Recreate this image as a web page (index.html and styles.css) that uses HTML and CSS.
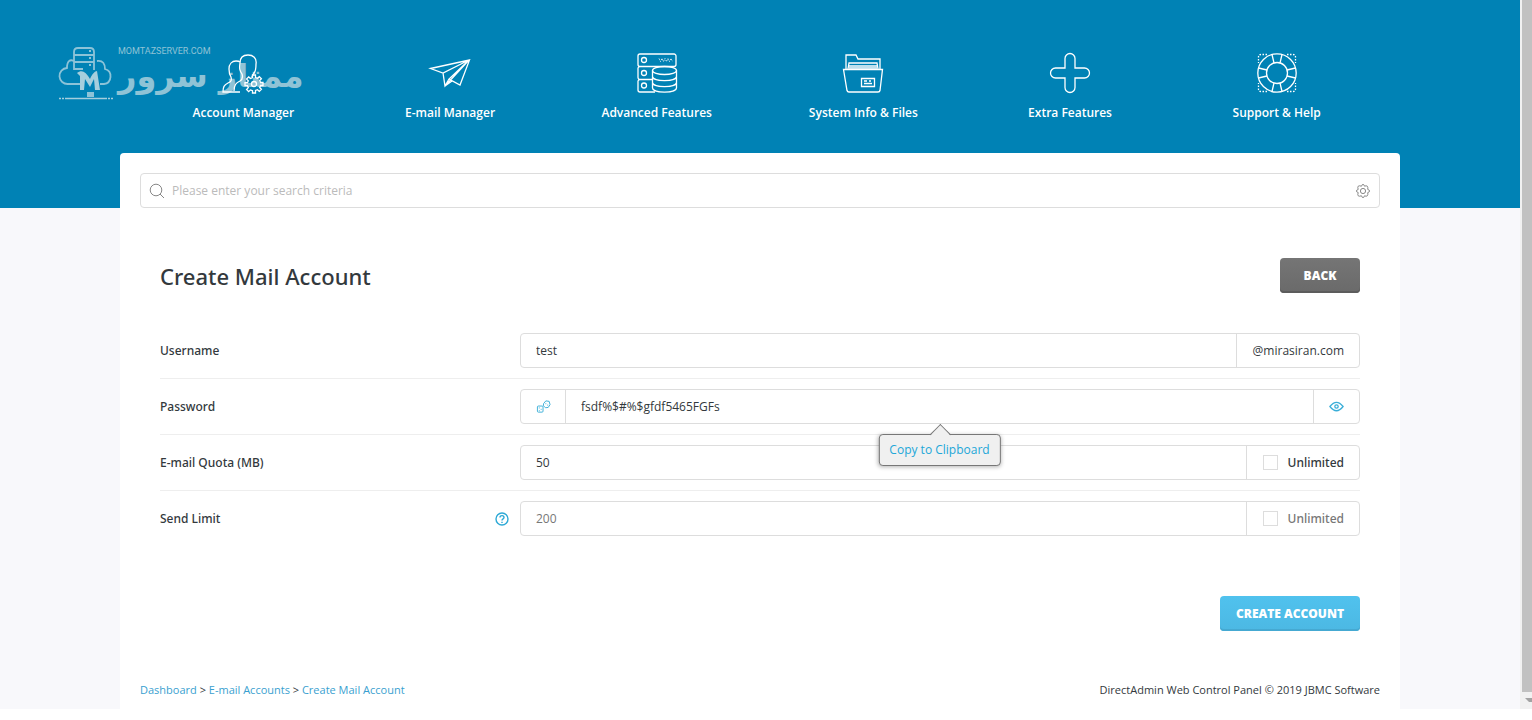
FILE: index.html
```html
<!DOCTYPE html>
<html lang="en">
<head>
    <meta charset="UTF-8">
    <meta name="viewport" content="width=device-width, initial-scale=1.0">
    <title>Create Mail Account</title>
    <link rel="stylesheet" href="styles.css">
</head>
<body>
    <div class="app">
        <header class="header">
            <a class="logo" href="#" aria-label="Momtaz Server">
                <svg class="logo-mark" width="56" height="56" viewBox="0 0 56 56">
                    <g fill="none" stroke="#8cc3d8" stroke-width="1.8">
                        <path d="M22 39H10a8 8 0 0 1-1-16c0-7 3-9 7-7M39 16c6-1 8 3 8 8 8 2 7 14-1 15h-4"/>
                        <path d="M16 25V7c0-3 1-4 4-4h12c3 0 4 1 4 4v18M16 10h20M16 17h20M16 24h9"/>
                        <path d="M31 6h2M31 13h2M31 20h2"/>
                    </g>
                    <path d="M22 45V31l-3-3c5-4 9-1 13 6 2-5 5-8 7-8l3 19h-5l-1-11-4 8-5-8-1 11z" fill="#a5cedd"/>
                    <path d="M29 47h7v5h-7z" fill="#8cc3d8"/>
                    <path d="M1 53.500h54" stroke="#a5cedd" stroke-width="1.500" stroke-dasharray="2 1 2 1 42 1"/>
                </svg>
                <span class="logo-text">
                    <span class="logo-domain">MOMTAZSERVER.COM</span>
                    <span class="logo-name" lang="fa" dir="rtl">ممتاز سرور</span>
                </span>
            </a>
            <nav class="nav">
                <a class="nav-item" href="#">
                    <svg class="nav-icon" viewBox="0 0 40 40">
                        <path d="M17 39H0c0-5 1-7 5-9 3-1 4-3 3-6-2-3-2-5-2-8 0-5 3-8 7-8 2 0 3 0 4 1"/>
                        <path d="M11 38c0-6 2-8 6-10 3-2 3-4 2-7-2-3-3-5-2-11 0-5 3-8 8-8s9 3 8 9c0 4 0 7-2 9-1 2-2 3-2 4"/>
                        <circle cx="31" cy="31" r="2.500"/>
                        <path d="M29.500 24.500V22h3v2.500l2 .8 1.800-1.600 2.100 2.100-1.700 1.800.8 1.900H40v3h-2.500l-.8 2 1.700 1.800-2.100 2.100-1.800-1.700-2 .8V40h-3v-2.300l-2-.8-1.800 1.700-2.100-2.100 1.700-1.800-.8-2H22v-3h2.500l.8-1.900-1.700-1.800 2.100-2.100 1.800 1.600z"/>
                    </svg>
                    <span>Account Manager</span>
                </a>
                <a class="nav-item" href="#">
                    <svg class="nav-icon" viewBox="0 0 40 40">
                        <path d="M.5 15.500L39.500 7 30 32l-11-6L39 7 13 20zM13 20l2 13L39 7M15 33l7-5M19 26l-4 7"/>
                    </svg>
                    <span>E-mail Manager</span>
                </a>
                <a class="nav-item" href="#">
                    <svg class="nav-icon" viewBox="0 0 40 40">
                        <path d="M15 26.500H3a2 2 0 0 1-2-2v-9a2 2 0 0 1 2-2h34a2 2 0 0 0 2-2V3a2 2 0 0 0-2-2H3a2 2 0 0 0-2 2v8.500a2 2 0 0 0 2 2M1 28a2 2 0 0 1 2-1.500M1 28v9a2 2 0 0 0 2 2h15"/>
                        <circle cx="7" cy="7" r="2.500"/>
                        <circle cx="7" cy="20" r="2.500"/>
                        <circle cx="7" cy="32.500" r="2.500"/>
                        <ellipse cx="27.500" cy="17.500" rx="12" ry="4"/>
                        <path d="M15.500 17.500V35c0 5.500 24 5.500 24 0V17.500M15.500 23.500c0 5.500 24 5.500 24 0M15.500 29.500c0 5.500 24 5.500 24 0"/>
                        <path d="M22 5.500l1.500 3L25 5.500l1.500 3 1.500-3 1.500 3 1.500-3 1.500 3 1.500-3 1.500 3" stroke-width=".8" stroke-dasharray="1.500 1"/>
                    </svg>
                    <span>Advanced Features</span>
                </a>
                <a class="nav-item" href="#">
                    <svg class="nav-icon" viewBox="0 0 40 40">
                        <path d="M.5 16.500h39L37 37.500q-.3 1.500-2 1.500H6q-1.500 0-2-1.500zM3 16V2h10l2 4h22v10"/>
                        <path d="M5 16l1-6h28l1 6M6 13h28M6 15h28"/>
                        <path d="M18.500 25.500h13v8h-13zM21 30.500h8M21 28h3M26 28h2"/>
                    </svg>
                    <span>System Info &amp; Files</span>
                </a>
                <a class="nav-item" href="#">
                    <svg class="nav-icon" viewBox="0 0 40 40">
                        <path d="M15 15V5.500a5 5 0 0 1 10 0V15h9.500a5 5 0 0 1 0 10H25v9.500a5 5 0 0 1-10 0V25H5.500a5 5 0 0 1 0-10z"/>
                    </svg>
                    <span>Extra Features</span>
                </a>
                <a class="nav-item" href="#">
                    <svg class="nav-icon" viewBox="0 0 40 40">
                        <circle cx="20" cy="20" r="19.200"/>
                        <circle cx="20" cy="20" r="10.500"/>
                        <path d="M15 1.500L17 10M25 1.500L23 10M15 38.500L17 30M25 38.500L23 30M1.500 15L10 17M1.500 25L10 23M38.500 15L30 17M38.500 25L30 23"/>
                        <path d="M10 1.500H4q-2.500 0-2.500 2.500v6M30 1.500h6q2.500 0 2.500 2.500v6M10 38.500H4q-2.500 0-2.500-2.500v-6M30 38.500h6q2.500 0 2.500-2.500v-6" stroke-dasharray="1.500 1.500"/>
                    </svg>
                    <span>Support &amp; Help</span>
                </a>
            </nav>
        </header>

        <main class="card">
            <form class="search">
                <svg class="search-icon" viewBox="0 0 16 16"><circle cx="7" cy="7" r="5.800"/><path d="M11 11l4 4"/></svg>
                <input type="text" class="search-input" aria-label="Search" placeholder="Please enter your search criteria">
                <button type="button" class="search-settings" aria-label="Search settings">
                    <svg class="search-icon" viewBox="0 0 16 16">
                        <circle cx="8" cy="8" r="2.600"/>
                        <path d="M6.500 3.200Q8-.8 9.500 3.200q3.900-1.700 3.300 3.300 4 1.500 0 3 .6 5-3.300 3.300-1.500 4-3 0-4.900 1.700-3.300-3.300-4-1.500 0-3-1.600-5 3.300-3.300z"/>
                    </svg>
                </button>
            </form>

            <form class="content">
                <div class="title-row">
                    <h1>Create Mail Account</h1>
                    <button type="button" class="btn btn-back">BACK</button>
                </div>

                <div class="row">
                    <label class="row-label" for="username">Username</label>
                    <div class="field">
                        <input type="text" id="username" value="test">
                        <span class="addon">@mirasiran.com</span>
                    </div>
                </div>
                <div class="row">
                    <label class="row-label" for="password">Password</label>
                    <div class="field">
                        <button type="button" class="addon addon-icon addon-left" aria-label="Generate password">
                            <svg width="15" height="15" viewBox="0 0 16 16">
                                <rect x="1.500" y="7.500" width="6" height="6.500" rx="1"/>
                                <path d="M8 5l2.500-3 3.500.5 1 3.500-2 3-3 .3-2-2z"/>
                                <path d="M3 9.500h1M5 11h1M3 12.500h1M10 5h1M12 6.500h1"/>
                            </svg>
                        </button>
                        <div class="copy-field">
                            <input type="text" id="password" value="fsdf%$#%$gfdf5465FGFs">
                            <button type="button" class="copy-tip">Copy to Clipboard</button>
                        </div>
                        <button type="button" class="addon addon-icon" aria-label="Show password">
                            <svg width="15" height="15" viewBox="0 0 16 16">
                                <path d="M1 8Q8-1 15 8 8 17 1 8z" stroke-width="1.400"/>
                                <circle cx="8" cy="8" r="1.800" stroke-width="1.400"/>
                            </svg>
                        </button>
                    </div>
                </div>
                <div class="row">
                    <label class="row-label" for="quota">E-mail Quota (MB)</label>
                    <div class="field">
                        <input type="text" id="quota" value="50">
                        <label class="addon addon-check"><input type="checkbox">Unlimited</label>
                    </div>
                </div>
                <div class="row">
                    <div class="row-label">
                        <label for="limit">Send Limit</label>
                        <button type="button" class="help" aria-label="Help">
                            <svg width="14" height="14" viewBox="0 0 14 14">
                                <circle cx="7" cy="7" r="6"/>
                                <path d="M5 5.500c0-2.600 4-2.500 4 0C9 7 7 6.800 7 8.500M7 9.800V11"/>
                            </svg>
                        </button>
                    </div>
                    <div class="field field-disabled">
                        <input type="text" id="limit" value="200" disabled>
                        <label class="addon addon-check"><input type="checkbox" disabled>Unlimited</label>
                    </div>
                </div>

                <div class="actions">
                    <button type="submit" class="btn btn-create">CREATE ACCOUNT</button>
                </div>
            </form>

            <footer class="footer">
                <div><a href="#">Dashboard</a> &gt; <a href="#">E-mail Accounts</a> &gt; <a href="#">Create Mail Account</a></div>
                <div>DirectAdmin Web Control Panel © 2019 JBMC Software</div>
            </footer>
        </main>
    </div>
    <div class="scrollbar">
        <div class="scrollbar-thumb"></div>
        <svg class="scrollbar-arrow" viewBox="0 0 10 17"><path d="M3 6h7v4L7 10z"/></svg>
    </div>
</body>
</html>
```
FILE: styles.css
```css
* {
    box-sizing: border-box;
}
body {
    margin: 0;
    display: flex;
    min-height: calc(100vh - 11px);
    background: #ffffff;
    font-family: "Open Sans", sans-serif;
    font-size: 12px;
    line-height: 20px;
    color: #33393d;
}
input, button {
    font: inherit;
    color: inherit;
}
button {
    cursor: pointer;
}
a {
    color: #3a9fd0;
    text-decoration: none;
}
svg {
    display: block;
    fill: none;
}

.app {
    flex: 1;
    display: flex;
    flex-direction: column;
    position: relative;
    padding: 0 120px;
    background: linear-gradient(#0082b5 208px, #f8f8fb 208px);
}

/* header */
.header {
    padding: 53px 20px 30px;
}
.logo {
    position: absolute;
    left: 58px;
    top: 45px;
    display: flex;
    gap: 4px;
    color: #8fc3d6;
}
.logo-text {
    display: flex;
    flex-direction: column;
}
.logo-domain {
    font: 9px/12px Roboto, sans-serif;
}
.logo-name {
    font: bold 32px/38px "DejaVu Sans", sans-serif;
    white-space: nowrap;
}
.nav {
    position: relative;
    display: flex;
}
.nav-item {
    flex: 1;
    display: flex;
    flex-direction: column;
    align-items: center;
    gap: 10px;
    color: #ffffff;
    font-weight: 600;
}
.nav-icon {
    width: 40px;
    height: 40px;
    stroke: #ffffff;
    stroke-width: 1.3;
    overflow: visible;
}

/* card */
.card {
    flex: 1;
    display: flex;
    flex-direction: column;
    padding: 20px 20px 9px;
    background: #ffffff;
    border-radius: 4px 4px 0 0;
}
.search {
    display: flex;
    align-items: center;
    height: 35px;
    padding: 0 8px;
    border: 1px solid #dddddd;
    border-radius: 4px;
}
.search-icon {
    width: 16px;
    height: 16px;
    stroke: #888888;
}
.search-input {
    flex: 1;
    border: none;
    outline: none;
    padding: 0 7px;
    background: none;
}
.search-input::placeholder {
    color: #bbbbbb;
}
.search-settings {
    padding: 0;
    border: none;
    background: none;
}

.content {
    padding: 50px 20px 48px;
}
.title-row {
    display: flex;
    justify-content: space-between;
    align-items: center;
    margin-bottom: 30px;
}
h1 {
    margin: 0;
    font-family: "Noto Sans", sans-serif;
    font-size: 22px;
    line-height: 30px;
    font-weight: 500;
}
.btn {
    height: 35px;
    border: none;
    border-radius: 4px;
    color: #ffffff;
    font-weight: 800;
}
.btn-back {
    width: 80px;
    background: linear-gradient(#757575, #6a6a6a);
    box-shadow: inset 0 -2px 0 #5c5c5c;
}
.btn-create {
    padding: 0 16px;
    background: linear-gradient(#50c2ee, #4cb8e3);
    box-shadow: inset 0 -2px 0 #45a9d2;
}

/* form rows */
.row {
    display: grid;
    grid-template-columns: 3fr 7fr;
    align-items: center;
    padding: 10px 0;
    border-bottom: 1px solid #eeeeee;
}
.row:nth-last-child(2) {
    border-bottom: none;
}
.row-label {
    display: flex;
    justify-content: space-between;
    align-items: center;
    padding-right: 11px;
    font-family: "Noto Sans", sans-serif;
    font-weight: 500;
}
.help {
    padding: 0;
    border: none;
    background: none;
}
.help svg {
    stroke: #2da9d6;
    stroke-width: 1.4;
}
.field {
    display: flex;
    height: 35px;
    border: 1px solid #dddddd;
    border-radius: 4px;
}
.field input[type="text"] {
    flex: 1;
    width: 100%;
    min-width: 0;
    height: 100%;
    padding: 0 15px;
    border: none;
    outline: none;
    background: none;
}
.addon {
    display: flex;
    align-items: center;
    gap: 10px;
    padding: 0 15px 0 16px;
    border: 0 solid #dddddd;
    border-left-width: 1px;
    background: none;
}
.addon-check {
    font-family: "Noto Sans", sans-serif;
    font-weight: 500;
}
.addon-icon {
    padding: 0 15px;
}
.addon-icon svg {
    stroke: #3aaed8;
}
.addon-left {
    padding-right: 14px;
    border-width: 0 1px 0 0;
}
.addon input {
    appearance: none;
    width: 15px;
    height: 15px;
    margin: 0;
    border: 1px solid #dddddd;
}
.field-disabled {
    color: #777777;
}
.copy-field {
    flex: 1;
    position: relative;
}
.copy-tip {
    position: absolute;
    z-index: 1;
    top: 44px;
    left: 50%;
    transform: translateX(-50%);
    height: 32px;
    padding: 0 10px;
    border: 1px solid #777777;
    border-radius: 4px;
    background: #f0f0f0;
    box-shadow: 0 1px 4px rgba(0, 0, 0, 0.3);
    color: #22a7d8;
    white-space: nowrap;
}
.copy-tip::before {
    content: "";
    position: absolute;
    top: -8px;
    left: 50%;
    width: 14px;
    height: 14px;
    margin-left: -7px;
    border: 1px solid #777777;
    border-width: 1px 0 0 1px;
    background: linear-gradient(135deg, #f0f0f0 50%, transparent 50%);
    transform: rotate(45deg);
}
.actions {
    display: flex;
    justify-content: flex-end;
    margin-top: 50px;
}

.footer {
    display: flex;
    justify-content: space-between;
    margin-top: auto;
    font-size: 11px;
}

/* scrollbar */
.scrollbar {
    display: flex;
    flex-direction: column;
    width: 12px;
    padding-left: 2px;
    background: #f1f1f1;
}
.scrollbar-thumb {
    flex: 1;
    background: #c1c1c1;
}
.scrollbar-arrow {
    width: 10px;
    height: 17px;
    fill: #a3a3a3;
}
```
